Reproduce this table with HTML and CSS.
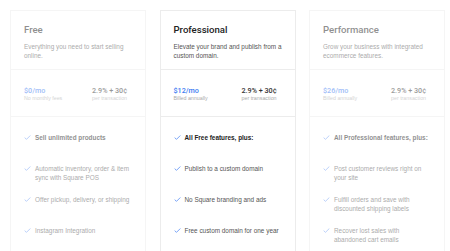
FILE: index.html
```html
<!DOCTYPE html>
<html>
<head>
<meta charset="utf-8">
<link rel="stylesheet" href="styles.css">
</head>
<body>
<div class="plans">
  <div class="card faded">
    <div class="head">
      <div class="title">Free</div>
      <div class="desc">Everything you need to start selling online.</div>
    </div>
    <div class="price">
      <div><div class="amount">$0/mo</div><div class="sub">No monthly fees</div></div>
      <div><div class="fee">2.9% + 30¢</div><div class="sub">per transaction</div></div>
    </div>
    <ul class="features">
      <li><svg class="check" viewBox="0 0 8 6"><polyline points="0.6,3.2 2.8,5.2 7.4,0.6"/></svg><span class="strong">Sell unlimited products</span></li>
      <li><svg class="check" viewBox="0 0 8 6"><polyline points="0.6,3.2 2.8,5.2 7.4,0.6"/></svg><span>Automatic inventory, order &amp; item sync with Square POS</span></li>
      <li><svg class="check" viewBox="0 0 8 6"><polyline points="0.6,3.2 2.8,5.2 7.4,0.6"/></svg><span>Offer pickup, delivery, or shipping</span></li>
      <li><svg class="check" viewBox="0 0 8 6"><polyline points="0.6,3.2 2.8,5.2 7.4,0.6"/></svg><span>Instagram Integration</span></li>
    </ul>
  </div>
  <div class="card">
    <div class="head">
      <div class="title">Professional</div>
      <div class="desc">Elevate your brand and publish from a custom domain.</div>
    </div>
    <div class="price">
      <div><div class="amount">$12/mo</div><div class="sub">Billed annually</div></div>
      <div><div class="fee">2.9% + 30¢</div><div class="sub">per transaction</div></div>
    </div>
    <ul class="features">
      <li><svg class="check" viewBox="0 0 8 6"><polyline points="0.6,3.2 2.8,5.2 7.4,0.6"/></svg><span class="strong">All Free features, plus:</span></li>
      <li><svg class="check" viewBox="0 0 8 6"><polyline points="0.6,3.2 2.8,5.2 7.4,0.6"/></svg><span>Publish to a custom domain</span></li>
      <li><svg class="check" viewBox="0 0 8 6"><polyline points="0.6,3.2 2.8,5.2 7.4,0.6"/></svg><span>No Square branding and ads</span></li>
      <li><svg class="check" viewBox="0 0 8 6"><polyline points="0.6,3.2 2.8,5.2 7.4,0.6"/></svg><span>Free custom domain for one year</span></li>
    </ul>
  </div>
  <div class="card faded">
    <div class="head">
      <div class="title">Performance</div>
      <div class="desc">Grow your business with integrated ecommerce features.</div>
    </div>
    <div class="price">
      <div><div class="amount">$26/mo</div><div class="sub">Billed annually</div></div>
      <div><div class="fee">2.9% + 30¢</div><div class="sub">per transaction</div></div>
    </div>
    <ul class="features">
      <li><svg class="check" viewBox="0 0 8 6"><polyline points="0.6,3.2 2.8,5.2 7.4,0.6"/></svg><span class="strong">All Professional features, plus:</span></li>
      <li><svg class="check" viewBox="0 0 8 6"><polyline points="0.6,3.2 2.8,5.2 7.4,0.6"/></svg><span>Post customer reviews right on your site</span></li>
      <li><svg class="check" viewBox="0 0 8 6"><polyline points="0.6,3.2 2.8,5.2 7.4,0.6"/></svg><span>Fulfill orders and save with discounted shipping labels</span></li>
      <li><svg class="check" viewBox="0 0 8 6"><polyline points="0.6,3.2 2.8,5.2 7.4,0.6"/></svg><span>Recover lost sales with abandoned cart emails</span></li>
    </ul>
  </div>
</div>
</body>
</html>
```
FILE: styles.css
```css
html, body {
  margin: 0;
  background: #fff;
  overflow: hidden;
}
body {
  font-family: "Liberation Sans", Arial, sans-serif;
  color: #333;
}
.plans {
  display: grid;
  grid-template-columns: repeat(3, 136px);
  column-gap: 13.5px;
  padding: 10px 0 0 10px;
}
.card {
  border: 1px solid #ececec;
  background: #fff;
  height: 260px;
  box-sizing: border-box;
}
.faded {
  opacity: 0.5;
}
.head {
  padding: 13px 13px 8px;
  border-bottom: 1px solid #ececec;
}
.title {
  font-family: Roboto, "Liberation Sans", sans-serif;
  font-size: 9.6px;
  line-height: 12px;
  font-weight: 500;
  color: #222;
}
.desc {
  margin-top: 6px;
  font-size: 6.4px;
  line-height: 9.4px;
  color: #555;
}
.price {
  display: grid;
  grid-template-columns: 68px auto;
  padding: 16px 13px 14px;
  border-bottom: 1px solid #ececec;
  white-space: nowrap;
}
.amount,
.fee {
  font-family: Roboto, "Liberation Sans", sans-serif;
  font-size: 7.2px;
  line-height: 9px;
  font-weight: 500;
  color: #333;
}
.amount {
  color: #3d7bf2;
}
.sub {
  font-size: 5.3px;
  line-height: 7px;
  color: #aaa;
}
.features {
  list-style: none;
  margin: 0;
  padding: 16px 13.5px 0 13px;
  display: grid;
  grid-auto-rows: 31px;
}
.features li {
  display: flex;
  align-items: flex-start;
  gap: 4px;
  font-size: 6.4px;
  line-height: 9.4px;
  color: #555;
}
.check {
  flex: none;
  width: 7px;
  height: 5px;
  margin-top: 2.5px;
  fill: none;
  stroke: #5f93f5;
  stroke-width: 1;
}
.strong {
  font-weight: 700;
  color: #222;
}
```
